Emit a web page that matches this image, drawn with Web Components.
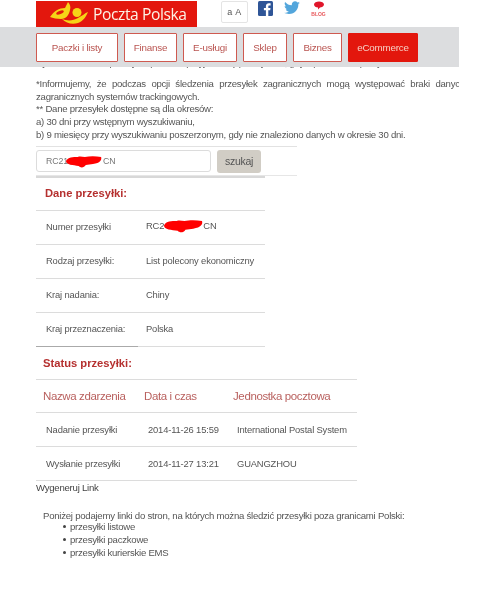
<!doctype html>
<html lang="pl">
<head>
<meta charset="utf-8">
<title>Poczta Polska</title>
<style>
  html,body{margin:0;padding:0;background:#fff}
  body{font-family:"Liberation Sans",Arial,sans-serif;color:#555;width:490px;height:600px;overflow:hidden;filter:blur(.3px)}
</style>
</head>
<body>
<pp-header></pp-header>
<pp-nav>
  <pp-tab style="width:82px">Paczki i listy</pp-tab>
  <pp-tab style="width:53px">Finanse</pp-tab>
  <pp-tab style="width:54px">E-usługi</pp-tab>
  <pp-tab style="width:44px">Sklep</pp-tab>
  <pp-tab style="width:49px">Biznes</pp-tab>
  <pp-tab style="width:70px" active>eCommerce</pp-tab>
</pp-nav>
<pp-notice></pp-notice>
<pp-search></pp-search>
<pp-details></pp-details>
<pp-status></pp-status>
<pp-links></pp-links>

<script>
const SCRIBBLE = `<svg viewBox="0 0 40 12" preserveAspectRatio="none"><path d="M0 5C2 1 8 1 13 1c3-1 5 0 8 0 5-1 12-1 18 0 1 3-1 6-9 7l-8 1c-2 3-6 3-8 1C8 9 0 9 0 5z" fill="#f00"/></svg>`;

class PpHeader extends HTMLElement {
  constructor() {
    super();
    this.attachShadow({ mode: "open" });
  }
  connectedCallback() {
    this.shadowRoot.innerHTML = `
      <style>
        :host{display:flex;height:27px;padding-left:36px;align-items:flex-start}
        .logo{display:flex;align-items:center;width:161px;height:26px;margin-top:1px;background:#e3170d;color:#fdf3e6;font:15.6px/25px "Open Sans",sans-serif;letter-spacing:-.4px;box-sizing:border-box;padding-left:9px}
        .logo svg{width:50px;height:26px;flex:none}
        .font{display:flex;align-items:center;justify-content:center;width:25px;height:20px;margin:1px 0 0 24px;border:1px solid #e4e4e4;border-radius:2px;font-size:9px;color:#555;letter-spacing:.5px}
        .social{display:flex;margin-left:10px;gap:11px}
        svg.s{display:block}
        .blog{display:flex;flex-direction:column;align-items:center;width:15px;font-size:5px;font-weight:bold;color:#e8575a;line-height:6px}
        .blog svg{display:block;margin:1px 0 1px}
      </style>
      <div class="logo">
        <svg viewBox="45 -1 50 26">
          <path d="M50 15C54 9 59 6 65 6c1-2 2-4 3-6 2 2 3 5 2 8-1 5-4 9-9 9-4 0-8-1-11-2z" fill="#f6d417"/>
          <ellipse cx="60" cy="10.500" rx="4" ry="1.700" transform="rotate(-22 60 10.500)" fill="#e3170d"/>
          <circle cx="77" cy="10.500" r="4.500" fill="#f6d417"/>
          <path d="M62 17c5 2 11 2 16-1 4-2 7-5 10-6-2 5-5 9-10 11-6 2-12 0-16-4z" fill="#f6d417"/>
        </svg>
        <span style="margin-left:-2px">Poczta Polska</span>
      </div>
      <div class="font">a A</div>
      <div class="social">
        <svg class="s" width="15" height="15" viewBox="0 0 15 15" style="margin-top:1px"><rect width="15" height="15" rx="1.5" fill="#2f5597"/><path d="M10.300 15V9.200h1.900l.3-2.300h-2.200V5.500c0-.7.2-1.100 1.100-1.100h1.200V2.300c-.5-.1-1-.1-1.700-.1-1.800 0-3 1.100-3 3.100v1.600h-2v2.300h2V15z" fill="#fff"/></svg>
        <svg class="s" width="16" height="14" viewBox="0 0 24 20" style="margin-top:1px"><path d="M24 2.400c-.9.400-1.800.700-2.800.800 1-.6 1.800-1.600 2.200-2.700-1 .6-2 1-3.100 1.200C19.300.6 18 0 16.600 0c-2.700 0-4.900 2.200-4.900 4.900 0 .4 0 .8.100 1.100C7.700 5.800 4.100 3.900 1.700.9c-.4.700-.7 1.600-.7 2.500 0 1.700.9 3.200 2.200 4.100-.8 0-1.600-.2-2.200-.6v.1c0 2.400 1.700 4.400 3.900 4.800-.4.100-.8.200-1.300.2-.3 0-.6 0-.9-.1.600 2 2.400 3.400 4.600 3.400-1.700 1.300-3.800 2.100-6.100 2.100-.4 0-.8 0-1.200-.1C2.200 18.300 4.800 19 7.500 19c9.100 0 14-7.500 14-14v-.6c1-.7 1.800-1.500 2.500-2z" fill="#53a6dc"/></svg>
        <div class="blog">
          <svg width="12" height="9" viewBox="0 0 12 9"><path d="M1 3.500C1 1.500 3.500.5 6 .5s5 1 5 3-2.500 3-4 3L5 8.500 5 6.400C3 6.300 1 5.500 1 3.500z" fill="#e0162b"/></svg>
          <span>BLOG</span>
        </div>
      </div>
    `;
  }
}
customElements.define("pp-header", PpHeader);

class PpNav extends HTMLElement {
  constructor() {
    super();
    this.attachShadow({ mode: "open" });
  }
  connectedCallback() {
    this.shadowRoot.innerHTML = `
      <style>
        :host{display:flex;gap:6px;width:459px;height:40px;padding:6px 0 5px 36px;box-sizing:border-box;background:#dcdddf}
      </style>
      <slot></slot>
    `;
  }
}
customElements.define("pp-nav", PpNav);

class PpTab extends HTMLElement {
  constructor() {
    super();
    this.attachShadow({ mode: "open" });
  }
  connectedCallback() {
    this.shadowRoot.innerHTML = `
      <style>
        :host{display:flex;align-items:center;justify-content:center;box-sizing:border-box;height:29px;background:#fff;border:1px solid #cf5a50;border-radius:1px;color:#b9534f;font-size:9.800px;letter-spacing:-.2px}
        :host([active]){background:#e3170d;border-color:#e3170d;color:#f6cfc4}
      </style>
      <slot></slot>
    `;
  }
}
customElements.define("pp-tab", PpTab);

class PpNotice extends HTMLElement {
  constructor() {
    super();
    this.attachShadow({ mode: "open" });
  }
  connectedCallback() {
    this.shadowRoot.innerHTML = `
      <style>
        :host{display:block;width:423px;padding-left:36px;overflow:hidden;font-size:9.600px;letter-spacing:-.25px;line-height:12.700px;color:#555}
        .cut{height:3px;display:flex;align-items:flex-end;white-space:nowrap;overflow:hidden;margin-bottom:8px}
        p{margin:0;white-space:nowrap}
        .just{word-spacing:3.100px}
      </style>
      <div class="cut"><span>System śledzenia przesyłek pozwala przyjrzeć się przesyłkom, gdy wpiszesz ich pełny numer</span></div>
      <p class="just">*Informujemy, że podczas opcji śledzenia przesyłek zagranicznych mogą występować braki danych</p>
      <p>zagranicznych systemów trackingowych.</p>
      <p>** Dane przesyłek dostępne są dla okresów:</p>
      <p>a) 30 dni przy wstępnym wyszukiwaniu,</p>
      <p>b) 9 miesięcy przy wyszukiwaniu poszerzonym, gdy nie znaleziono danych w okresie 30 dni.</p>
    `;
  }
}
customElements.define("pp-notice", PpNotice);

class PpSearch extends HTMLElement {
  constructor() {
    super();
    this.attachShadow({ mode: "open" });
  }
  connectedCallback() {
    this.shadowRoot.innerHTML = `
      <style>
        :host{display:block;margin:4px 0 0 36px;width:261px;box-sizing:border-box;border-top:1px solid #e2e2e2;border-bottom:1px solid #e6e6e6;padding:3px 0 2px}
        .row{display:flex;gap:6px;align-items:flex-start}
        .field{position:relative;box-sizing:border-box;width:175px;height:22px;border:1px solid #dcdcdc;border-radius:3px;display:flex;align-items:center;padding-left:9px;font-size:8.800px;letter-spacing:-.1px;color:#777}
        .field svg{position:absolute;left:29px;top:5px;width:36px;height:12px}
        .mid{display:inline-block;width:35px}
        button{box-sizing:border-box;width:44px;height:23px;border:0;border-radius:3px;background:#d1cdc5;color:#555;font:10.500px "Liberation Sans",sans-serif;letter-spacing:-.3px;padding:0}
      </style>
      <div class="row">
        <div class="field"><span>RC21</span><span class="mid"></span><span>CN</span>${SCRIBBLE}</div>
        <button>szukaj</button>
      </div>
    `;
  }
}
customElements.define("pp-search", PpSearch);

class PpDetails extends HTMLElement {
  constructor() {
    super();
    this.attachShadow({ mode: "open" });
  }
  connectedCallback() {
    const rows = [
      ["Numer przesyłki", `RC2<span class="red">${SCRIBBLE}</span>CN`],
      ["Rodzaj przesyłki:", "List polecony ekonomiczny"],
      ["Kraj nadania:", "Chiny"],
      ["Kraj przeznaczenia:", "Polska"],
    ];
    this.shadowRoot.innerHTML = `
      <style>
        :host{display:block;width:229px;margin-left:36px;border-top:2px solid #d8d8d8;font-size:9.400px;letter-spacing:-.16px;color:#555}
        h2{margin:0;height:32px;line-height:30px;padding-left:9px;font-size:11.200px;letter-spacing:0;font-weight:bold;color:#b5302f;border-bottom:1px solid #dcdcdc}
        .r{display:grid;grid-template-columns:100px 1fr;align-items:center;height:34px;box-sizing:border-box;padding:0 0 2px 10px;border-bottom:1px solid #dcdcdc}
        .red{display:inline-block;vertical-align:middle;width:39px;height:13px}
        .red svg{width:39px;height:13px;display:block}
        .end{height:1px;width:102px;background:#aaa;margin-top:-1px;position:relative}
      </style>
      <h2>Dane przesyłki:</h2>
      ${rows.map(r => `<div class="r"><span>${r[0]}</span><span>${r[1]}</span></div>`).join("")}
      <div class="end"></div>
    `;
  }
}
customElements.define("pp-details", PpDetails);

class PpStatus extends HTMLElement {
  constructor() {
    super();
    this.attachShadow({ mode: "open" });
  }
  connectedCallback() {
    const rows = [
      ["Nadanie przesyłki", "2014-11-26 15:59", "International Postal System"],
      ["Wysłanie przesyłki", "2014-11-27 13:21", "GUANGZHOU"],
    ];
    this.shadowRoot.innerHTML = `
      <style>
        :host{display:block;width:321px;margin-left:36px;font-size:9.400px;letter-spacing:-.16px;color:#555}
        h2{margin:0;height:32px;line-height:32px;padding-left:7px;font-size:11.200px;letter-spacing:0;font-weight:bold;color:#b5302f;border-bottom:1px solid #dcdcdc}
        .r{display:grid;align-items:center;box-sizing:border-box;border-bottom:1px solid #dcdcdc}
        .head{height:33px;padding-left:7px;font-size:11.500px;letter-spacing:-.38px;color:#b9615f;grid-template-columns:101px 89px 1fr}
        .body{height:34px;padding-left:10px;grid-template-columns:102px 89px 1fr}
      </style>
      <h2>Status przesyłki:</h2>
      <div class="r head"><span>Nazwa zdarzenia</span><span>Data i czas</span><span>Jednostka pocztowa</span></div>
      ${rows.map(r => `<div class="r body"><span>${r[0]}</span><span>${r[1]}</span><span>${r[2]}</span></div>`).join("")}
    `;
  }
}
customElements.define("pp-status", PpStatus);

class PpLinks extends HTMLElement {
  constructor() {
    super();
    this.attachShadow({ mode: "open" });
  }
  connectedCallback() {
    this.shadowRoot.innerHTML = `
      <style>
        :host{display:block;margin-left:36px;font-size:9.600px;letter-spacing:-.25px;line-height:13px;color:#444}
        .gen{height:22px}
        .txt{padding-left:7px;color:#555;margin-top:6px}
        ul{margin:-2px 0 0;padding:0 0 0 20px;list-style:none}
        li::before{content:"";display:inline-block;width:3px;height:3px;border-radius:50%;background:#444;margin-right:4px;vertical-align:2px}
      </style>
      <div class="gen">Wygeneruj Link</div>
      <div class="txt">Poniżej podajemy linki do stron, na których można śledzić przesyłki poza granicami Polski:
        <ul>
          <li>przesyłki listowe</li>
          <li>przesyłki paczkowe</li>
          <li>przesyłki kurierskie EMS</li>
        </ul>
      </div>
    `;
  }
}
customElements.define("pp-links", PpLinks);
</script>
</body>
</html>
